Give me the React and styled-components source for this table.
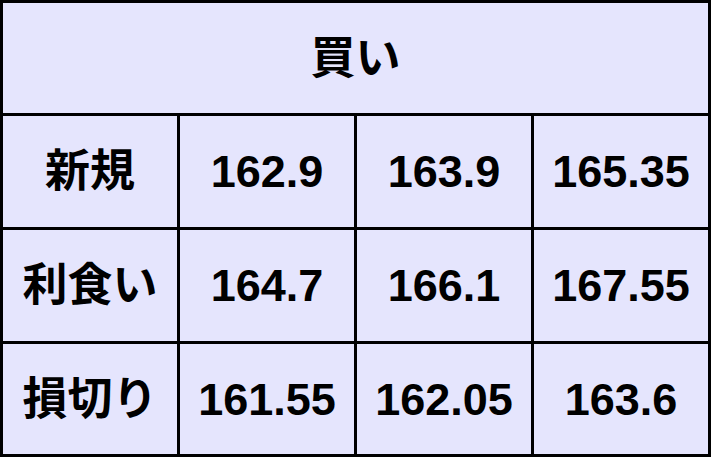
import React from 'react';
import styled, { createGlobalStyle } from 'styled-components';

const GlobalStyle = createGlobalStyle`
    html, body {
        margin: 0;
        padding: 0;
        background: #ffffff;
    }
`;

const PriceGrid = styled.div`
    display: grid;
    grid-template-columns: repeat(4, 174px);
    grid-template-rows: 110px 111px 111px 110px;
    gap: 3px;
    padding: 3px;
    width: 711px;
    height: 457px;
    box-sizing: border-box;
    background-color: #000000;
    font-family: "Liberation Sans", "Noto Sans CJK JP", sans-serif;
    font-weight: bold;
    font-size: 45px;
    color: #000000;
`;

const Cell = styled.div`
    display: flex;
    align-items: center;
    justify-content: center;
    background-color: #e5e5fd;
    line-height: 1;
    grid-column: ${(props) => (props.wide ? '1 / -1' : 'auto')};
`;

const rows = [
    { label: '新規', values: ['162.9', '163.9', '165.35'] },
    { label: '利食い', values: ['164.7', '166.1', '167.55'] },
    { label: '損切り', values: ['161.55', '162.05', '163.6'] },
];

export default function App() {
    return (
        <>
            <GlobalStyle />
            <PriceGrid>
                <Cell wide>買い</Cell>
                {rows.map((row) => (
                    <React.Fragment key={row.label}>
                        <Cell>{row.label}</Cell>
                        {row.values.map((v) => (
                            <Cell key={v}>{v}</Cell>
                        ))}
                    </React.Fragment>
                ))}
            </PriceGrid>
        </>
    );
}
